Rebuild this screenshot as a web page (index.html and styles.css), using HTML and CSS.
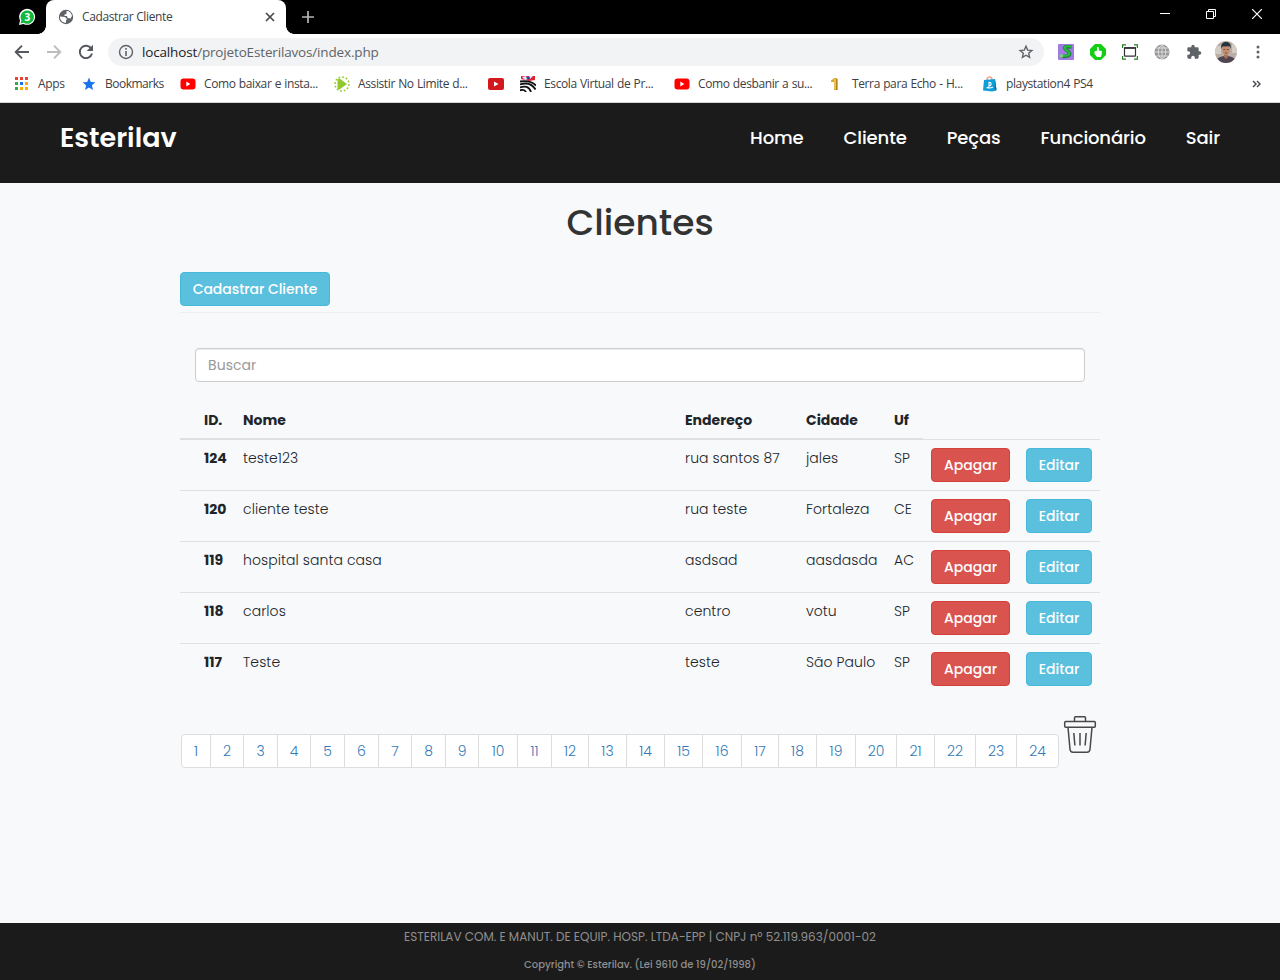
FILE: index.html
```html
<!DOCTYPE html>
<html lang="pt-BR">
<head>
<meta charset="utf-8">
<title>Cadastrar Cliente</title>
<link rel="stylesheet" href="styles.css">
</head>
<body>
<header class="browser">
  <div class="tabstrip">
    <svg class="pinned" width="18" height="18" viewBox="0 0 18 18"><path d="M1 17l1-4.500A8 8 0 1 1 5.500 16z" fill="#fff"/><path d="M2.500 15.600l.9-3.200A6.700 6.700 0 1 1 5.700 14.800z" fill="#12b83e"/><text x="9.300" y="12.800" class="badge-num">3</text></svg>
    <div class="tab">
      <svg width="16" height="16" viewBox="0 0 16 16"><circle cx="8" cy="8" r="7.200" fill="#5f6368"/><path d="M2 7.500l5 .5 2 2-1 1.500v2.300C4.500 13.800 1.800 11 2 7.500zM8.500 2c3 0 5 2 5.500 5l-1.500 2.500-3-.5-.5-2H6.500V5.500l2-.5z" fill="#fff"/></svg>
      <span class="tab-title">Cadastrar Cliente</span>
      <svg width="10" height="10" viewBox="0 0 10 10"><path d="M1 1l8 8M9 1L1 9" stroke="#45484c" stroke-width="1.700"/></svg>
    </div>
    <svg class="newtab" width="12" height="12" viewBox="0 0 12 12"><path d="M6 0v12M0 6h12" stroke="#b5b5b5" stroke-width="1.700"/></svg>
    <div class="window-buttons">
      <svg width="10" height="10" viewBox="0 0 10 10"><path d="M0 4.500h10" stroke="#fff"/></svg>
      <svg width="10" height="10" viewBox="0 0 10 10"><path d="M.5 2.500h7v7h-7zM2.500 2.500v-2h7v7h-2" fill="none" stroke="#fff"/></svg>
      <svg width="10" height="10" viewBox="0 0 10 10"><path d="M0 0l10 10M10 0L0 10" stroke="#fff" stroke-width="1.200"/></svg>
    </div>
  </div>
  <div class="toolbar">
    <svg width="16" height="16" viewBox="0 0 16 16"><path d="M15 8H2M8 1.700L1.700 8 8 14.300" fill="none" stroke="#55585d" stroke-width="1.900"/></svg>
    <svg width="16" height="16" viewBox="0 0 16 16"><path d="M1 8h13M8 1.700L14.300 8 8 14.300" fill="none" stroke="#babcbe" stroke-width="1.900"/></svg>
    <svg width="16" height="16" viewBox="0 0 16 16"><path d="M13.300 4.700A6.200 6.200 0 1 0 14 9.500" fill="none" stroke="#55585d" stroke-width="1.900"/><path d="M15 .8v6.300H8.700z" fill="#55585d"/></svg>
    <div class="omnibox">
      <svg width="16" height="16" viewBox="0 0 16 16"><circle cx="8" cy="8" r="6.500" fill="none" stroke="#5f6368" stroke-width="1.400"/><path d="M8 7v5M8 4v1.700" stroke="#5f6368" stroke-width="1.600"/></svg>
      <span class="url"><span class="host">localhost</span>/projetoEsterilavos/index.php</span>
      <svg width="16" height="16" viewBox="0 0 16 16"><path d="M8 2.200l1.700 3.900 4.200.4-3.200 2.800.9 4.100L8 11.200l-3.600 2.200.9-4.100L2.100 6.500l4.200-.4z" fill="none" stroke="#5f6368" stroke-width="1.400"/></svg>
    </div>
    <div class="extensions">
      <svg width="16" height="16" viewBox="0 0 16 16"><rect width="16" height="16" rx="1" fill="#a17be3"/><path d="M13.500 3C9 2.500 6 2.500 7 4.500s5.500 3.500 4.500 6c-1 2-4 2-8 1.800" fill="none" stroke="#16802d" stroke-width="3.600"/><path d="M13.500 2.600C9 2 6 2.500 7 4.500s5.500 3.500 4.500 5.600c-1 2-4 2-8 1.600" fill="none" stroke="#2abb43" stroke-width="2"/><circle cx="3.500" cy="11.800" r="1.900" fill="#7ec98a"/></svg>
      <svg width="16" height="16" viewBox="0 0 16 16"><path d="M5 0h6l5 5v6l-5 5H5l-5-5V5z" fill="#13ce13"/><path d="M4.500 7.500L7 6.500V3.500c.5-1 1.800-.5 1.800.5v2.500l3 .6v3.500l-1 2.400H7L4.500 10z" fill="#fff"/></svg>
      <svg width="16" height="16" viewBox="0 0 16 16"><path d="M.6 4V.8H4M12 .8h3.400V4M15.400 12v3.200H12M4 15.200H.6V12" fill="none" stroke="#248024" stroke-width="1.200"/><rect x="2.500" y="3.800" width="11" height="8.400" rx=".5" fill="none" stroke="#333" stroke-width="1.200"/><path d="M2 4h12" stroke="#333" stroke-width="1.600"/></svg>
      <svg width="16" height="16" viewBox="0 0 16 16"><circle cx="8" cy="8" r="7.500" fill="#979797"/><path d="M8 .5v15M.5 8h15M2 4h12M2 12h12M8 .5c-5 4-5 11 0 15c5-4 5-11 0-15" fill="none" stroke="#e2e2e2" stroke-width=".9"/></svg>
      <svg width="16" height="16" viewBox="0 0 24 24"><path d="M20.500 11H19V7a2 2 0 0 0-2-2h-4V3.500a2.500 2.500 0 0 0-5 0V5H4a2 2 0 0 0-2 2v3.800h1.500a2.700 2.700 0 0 1 0 5.400H2V20a2 2 0 0 0 2 2h3.800v-1.500a2.700 2.700 0 0 1 5.400 0V22H17a2 2 0 0 0 2-2v-4h1.500a2.500 2.500 0 0 0 0-5z" fill="#5f6368"/></svg>
      <svg class="avatar" width="22" height="22" viewBox="0 0 22 22"><rect width="22" height="22" fill="#b9aea4"/><path d="M0 5h6v8H0zM17 3h5v9h-5z" fill="#d2ccc5"/><path d="M1 22c0-5 4-7 10-7s10 2 10 7z" fill="#514650"/><path d="M9 12h4v4l-2 2-2-2z" fill="#a66f55"/><ellipse cx="11" cy="9" rx="3.800" ry="5.200" fill="#c58d70"/><path d="M6.500 8C5.500 3 7.500 1 11 1s5.500 2 4.500 7l-1-2.800-7 .3z" fill="#26333c"/><path d="M8.300 8.500h2M11.800 8.500h2M9.800 12h2.400" stroke="#59372d" stroke-width=".7"/></svg>
      <svg width="16" height="16" viewBox="0 0 16 16" fill="#5f6368"><circle cx="8" cy="2.900" r="1.500"/><circle cx="8" cy="8" r="1.500"/><circle cx="8" cy="13.100" r="1.500"/></svg>
    </div>
  </div>
  <nav class="bookmarks">
    <a><svg width="16" height="16" viewBox="0 0 16 16"><path d="M1 1h3v3H1zM6 1h3v3H6zM11 1h3v3h-3z" fill="#ea4335"/><path d="M1 6h3v3H1zM1 11h3v3H1z" fill="#34a853"/><path d="M6 6h3v3H6z" fill="#1a73e8"/><path d="M11 6h3v3h-3zM6 11h3v3H6zM11 11h3v3h-3z" fill="#fbab05"/></svg><span>Apps</span></a>
    <a class="tight"><svg width="16" height="16" viewBox="0 0 16 16"><path d="M7 1.500l1.800 4.400 4.600.3-3.500 3.100 1.100 4.600L7 11.400l-4 2.500 1.100-4.600L.6 6.200l4.600-.3z" fill="#1a73e8"/></svg><span>Bookmarks</span></a>
    <a><svg width="16" height="16" viewBox="0 0 16 16"><rect x=".5" y="2.500" width="15" height="11" rx="3" fill="#f00"/><path d="M6.300 5.600v4.800l4-2.400z" fill="#fff"/></svg><span>Como baixar e insta...</span></a>
    <a><svg width="16" height="16" viewBox="0 0 16 16"><circle cx="8" cy="8" r="7" fill="none" stroke="#9acb39" stroke-width="1.600" stroke-dasharray="1.800 1.860"/><path d="M3.500 3l2-.5L13 8l-7.500 5.500-2-.5z" fill="#92c82e"/></svg><span>Assistir No Limite d...</span></a>
    <a><svg width="18" height="16" viewBox="0 0 18 16"><rect x="1" y="2" width="16" height="12" rx="2" fill="#d4191e"/><path d="M7 5.500v5L11.500 8z" fill="#fff"/></svg></a>
    <a><svg width="16" height="16" viewBox="0 0 16 16"><rect width="16" height="16" fill="#fff"/><path d="M1 0h14v4L9 5 1 3z" fill="#e2232f"/><path d="M2 1l4-1 2 3-3 1zM9 0h4l-3 3z" fill="#dce3ff"/><path d="M6 1.500l3-1 1 2-2 1z" fill="#2944a5"/><path d="M0 5.500c7-1 12 0 16 4M0 8.500c6-2 12-1 15.500 5M0 11.500c5-2 9-1 11 4.500M0 14.300c3-1 5-.5 6 1.700" fill="none" stroke="#111" stroke-width="1.800"/></svg><span>Escola Virtual de Pr...</span></a>
    <a><svg width="16" height="16" viewBox="0 0 16 16"><rect x=".5" y="2.500" width="15" height="11" rx="3" fill="#f00"/><path d="M6.300 5.600v4.800l4-2.400z" fill="#fff"/></svg><span>Como desbanir a su...</span></a>
    <a><svg width="16" height="16" viewBox="0 0 16 16"><path d="M3 4.500C4.500 4 5 2.500 6.500 2H9v12H6V6H3z" fill="#dca52b"/><path d="M7 3v10" stroke="#f7db80"/><path d="M9 3v11" stroke="#8c650f"/></svg><span>Terra para Echo - H...</span></a>
    <a><svg width="16" height="16" viewBox="0 0 16 16"><path d="M5 4C5 0 10 0 10 4" fill="none" stroke="#f2a98c" stroke-width="1.600"/><path d="M2 4l11-1 1.500 11-4 1.500-9.500-1z" fill="#109ed9"/><path d="M13 3l1.500 11-2 1z" fill="#0874b4"/><path d="M7 6v7M7 6.300c2.800 0 2.800 3.500 0 3.500M4.500 12l2-.8M8 12l3-.8" fill="none" stroke="#fff" stroke-width="1.100"/></svg><span>playstation4 PS4</span></a>
    <svg width="9" height="8" viewBox="0 0 9 8"><path d="M1 1l3 3-3 3M5 1l3 3-3 3" fill="none" stroke="#4b4e52" stroke-width="1.500"/></svg>
  </nav>
</header>

<div class="site-header">
  <div class="logo">Esterilav</div>
  <nav class="menu"><a>Home</a><a>Cliente</a><a>Peças</a><a>Funcionário</a><a>Sair</a></nav>
</div>

<main class="content">
  <h1>Clientes</h1>
  <div class="actions"><a class="btn info create">Cadastrar Cliente</a></div>
  <div class="search"><input type="text" placeholder="Buscar"></div>
  <table class="clients">
    <colgroup><col class="c-pad"><col class="c-id"><col class="c-name"><col class="c-addr"><col class="c-city"><col class="c-uf"><col class="c-del"><col class="c-edit"></colgroup>
    <thead><tr><th></th><th>ID.</th><th>Nome</th><th>Endereço</th><th>Cidade</th><th>Uf</th></tr></thead>
    <tbody>
      <tr><td></td><th>124</th><td>teste123</td><td>rua santos 87</td><td>jales</td><td>SP</td><td><a class="btn danger">Apagar</a></td><td><a class="btn info">Editar</a></td></tr>
      <tr><td></td><th>120</th><td>cliente teste</td><td>rua teste</td><td>Fortaleza</td><td>CE</td><td><a class="btn danger">Apagar</a></td><td><a class="btn info">Editar</a></td></tr>
      <tr><td></td><th>119</th><td>hospital santa casa</td><td>asdsad</td><td>aasdasda</td><td>AC</td><td><a class="btn danger">Apagar</a></td><td><a class="btn info">Editar</a></td></tr>
      <tr><td></td><th>118</th><td>carlos</td><td>centro</td><td>votu</td><td>SP</td><td><a class="btn danger">Apagar</a></td><td><a class="btn info">Editar</a></td></tr>
      <tr><td></td><th>117</th><td>Teste</td><td>teste</td><td>São Paulo</td><td>SP</td><td><a class="btn danger">Apagar</a></td><td><a class="btn info">Editar</a></td></tr>
    </tbody>
  </table>
  <div class="pager">
    <div class="pages"><a>1</a><a>2</a><a>3</a><a>4</a><a>5</a><a>6</a><a>7</a><a>8</a><a>9</a><a>10</a><a>11</a><a>12</a><a>13</a><a>14</a><a>15</a><a>16</a><a>17</a><a>18</a><a>19</a><a>20</a><a>21</a><a>22</a><a>23</a><a>24</a></div>
    <svg width="34" height="40" viewBox="0 0 34 40" fill="none" stroke="#484848" stroke-width="1.500"><path d="M11.500 7V3.700q0-1 1-1h9q1 0 1 1V7"/><rect x="1.700" y="7.500" width="30.600" height="5.800" rx="1"/><path d="M5 13.300l2 22q.3 3 3 3h14q2.700 0 3-3l2-22M10.800 19l1.100 12.500M17 19v12.500M23.200 19l-1.100 12.500"/></svg>
  </div>
</main>

<footer class="footer">
  <p class="company">ESTERILAV COM. E MANUT. DE EQUIP. HOSP. LTDA-EPP | CNPJ nº 52.119.963/0001-02</p>
  <p class="copyright">Copyright © Esterilav. (Lei 9610 de 19/02/1998)</p>
</footer>
</body>
</html>
```

FILE: styles.css
```css
* { box-sizing: border-box; }
svg { display: block; flex: none; }
body {
  margin: 0;
  height: 980px;
  display: flex;
  flex-direction: column;
  background: #f8f9fb;
  color: #212529;
  font: 14px/20px Poppins, Inter, sans-serif;
}

/* Browser frame */
.browser {
  height: 103px;
  background: #fff;
  border-bottom: 1px solid #d5d6d8;
  font: 12px/16px "Segoe UI", "Open Sans", sans-serif;
  color: #3c4043;
  white-space: nowrap;
}
.tabstrip { height: 34px; background: #000; display: flex; align-items: center; }
.pinned { margin-left: 18px; }
.badge-num { font: bold 10px "Open Sans", sans-serif; fill: #fff; text-anchor: middle; }
.tab {
  position: relative;
  margin-left: 10px;
  width: 240px;
  height: 34px;
  padding: 0 11px 0 12px;
  display: flex;
  align-items: center;
  background: #fff;
  border-radius: 8px 8px 0 0;
}
/* curved feet of the active tab */
.tab::before, .tab::after {
  content: "";
  position: absolute;
  bottom: 0;
  width: 8px;
  height: 8px;
}
.tab::before { left: -8px; background: radial-gradient(circle at 0 0, transparent 7.5px, #fff 8px); }
.tab::after { right: -8px; background: radial-gradient(circle at 100% 0, transparent 7.5px, #fff 8px); }
.tab-title { flex: 1; margin-left: 8px; letter-spacing: -0.37px; }
.newtab { margin-left: 16px; }
.window-buttons { margin-left: auto; padding: 0 18px 6px 0; display: flex; gap: 36px; }
.toolbar { height: 36px; padding: 0 14px; display: flex; align-items: center; gap: 16px; }
.omnibox {
  width: 936px;
  height: 28px;
  margin-left: -2px;
  padding: 0 10px;
  display: flex;
  align-items: center;
  gap: 8px;
  border-radius: 14px;
  background: #f1f3f4;
}
.url { flex: 1; font-size: 13.5px; color: #5f6368; letter-spacing: -0.16px; }
.host { color: #202124; }
.extensions { display: flex; align-items: center; gap: 16px; margin-left: -2px; }
.avatar { border-radius: 50%; margin: 0 -3px; }
.bookmarks {
  height: 28px;
  padding-left: 14px;
  display: grid;
  grid-template-columns: 68px 98px 154px 153px 33px 154px 154px 154px 270px 9px;
  align-items: center;
}
.bookmarks a { display: flex; align-items: center; gap: 8px; letter-spacing: -0.38px; word-spacing: .5px; }
.bookmarks .tight { gap: 7px; letter-spacing: -0.5px; }

/* Site header */
.site-header {
  height: 80px;
  padding: 0 60px 10px;
  display: flex;
  align-items: center;
  justify-content: space-between;
  background: #1b1b1b;
  color: #fff;
}
.logo { font-size: 27px; font-weight: 600; line-height: 40px; }
.menu { display: flex; gap: 40px; font-size: 18px; font-weight: 500; letter-spacing: -0.13px; }

/* Client list */
.content { width: 920px; margin: 0 auto; flex: 1; }
h1 { margin: 20px 0 0; text-align: center; font-size: 36px; font-weight: 500; line-height: 40px; color: #333; }
.actions { margin-top: 29px; height: 41px; border-bottom: 1px solid #eee; }
.btn {
  display: block;
  height: 34px;
  padding: 6px 0;
  border: 1px solid;
  border-radius: 4px;
  color: #fff;
  font-weight: 500;
  text-align: center;
}
.info { background: #5bc0de; border-color: #46b8da; }
.danger { background: #d9534f; border-color: #d43f3a; }
.create { width: 150px; letter-spacing: -0.06px; }
.search { padding: 35px 15px 20px; }
.search input {
  display: block;
  width: 100%;
  height: 34px;
  padding: 6px 12px;
  border: 1px solid #ccc;
  border-radius: 4px;
  background: #fff;
  box-shadow: inset 0 1px 1px rgba(0, 0, 0, .075);
  font: inherit;
  letter-spacing: .05px;
}
.search input::placeholder { color: #999; opacity: 1; }
.clients { width: 920px; table-layout: fixed; border-collapse: collapse; text-align: left; white-space: nowrap; }
.clients th, .clients td { padding: 8px; vertical-align: top; }
.clients td { border-top: 1px solid #dee2e6; font-weight: 300; letter-spacing: .07px; }
.clients tbody th { border-top: 1px solid #dee2e6; }
.clients tbody tr { height: 51px; }
.clients thead th { border-bottom: 2px solid #dddfe1; }
.clients .btn { letter-spacing: 0; }
.clients th:first-child, .clients td:first-child { padding: 0; }
.c-pad { width: 16px; }
.c-id { width: 39px; }
.c-name { width: 442px; }
.c-addr { width: 121px; }
.c-city { width: 88px; }
.c-uf { width: 37px; }
.c-del { width: 95px; }
.c-edit { width: 82px; }
.pager { display: flex; align-items: flex-start; gap: 4px; margin-top: 20px; padding-left: 1px; }
.pages {
  margin-top: 20px;
  width: 878px;
  height: 34px;
  display: grid;
  grid-template-columns: 29px 33px 34px 33px 34px 34px 33px 34px 33px 39px 34px 37px 38px 38px 38px 39px 37px 38px 39px 41px 38px 41px 41px 41px;
  border: 1px solid #ddd;
  border-radius: 4px;
  background: #fff;
  color: #337ab7;
  font-weight: 300;
  line-height: 32px;
  text-align: center;
}
.pages a { border-right: 1px solid #ddd; }
.pages a:last-child { border-right: 0; }

.footer { height: 57px; background: #1b1b1b; color: #8f8f8f; text-align: center; }
.footer p { margin: 0; }
.company { padding-top: 4px; font-size: 12px; }
.copyright { padding-top: 8px; font-size: 10px; font-weight: 500; }
```
